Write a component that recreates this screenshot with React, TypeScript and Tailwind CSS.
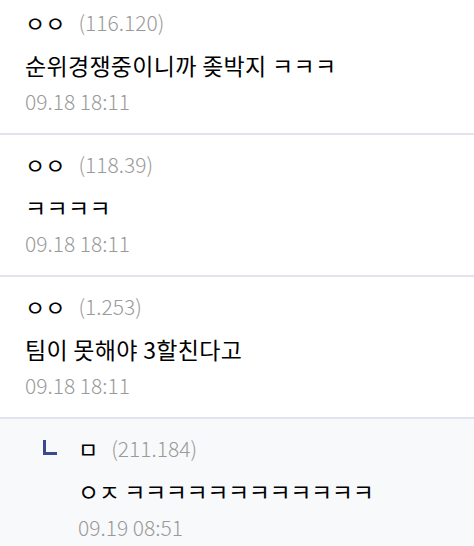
const font = "font-['Noto_Sans_CJK_KR','Noto_Sans',sans-serif]";

type Comment = {
  name: string;
  ip: string;
  text: string;
  date: string;
  reply?: boolean;
};

const comments: Comment[] = [
  { name: "ㅇㅇ", ip: "(116.120)", text: "순위경쟁중이니까 좆박지 ㅋㅋㅋ", date: "09.18 18:11" },
  { name: "ㅇㅇ", ip: "(118.39)", text: "ㅋㅋㅋㅋ", date: "09.18 18:11" },
  { name: "ㅇㅇ", ip: "(1.253)", text: "팀이 못해야 3할친다고", date: "09.18 18:11" },
  { name: "ㅁ", ip: "(211.184)", text: "ㅇㅈ ㅋㅋㅋㅋㅋㅋㅋㅋㅋㅋㅋㅋ", date: "09.19 08:51", reply: true },
];

function CommentItem({ c }: { c: Comment }) {
  return (
    <li
      className={`flex border-b-2 border-[#e3e2ee] pt-[14px] pb-[17px] ${c.reply ? "bg-[#f8f9fb] pl-[43px]" : "bg-white pl-[25px]"}`}
    >
      {c.reply && (
        <svg width="14" height="15" viewBox="0 0 14 15" className="mt-[7px] mr-[21px] shrink-0">
          <path d="M1.5 0 V13.5 H14" fill="none" stroke="#3b4a8e" strokeWidth="3" />
        </svg>
      )}
      <div className="flex flex-col">
        <div className="flex h-[30px] items-center gap-[13px] leading-[30px]">
          <span className="text-[22px] text-black">{c.name}</span>
          <span className="text-[21px] font-light text-[#9a9a9a]">{c.ip}</span>
        </div>
        <p
          className={`mt-[13px] h-[30px] text-[23px] leading-[30px] text-black ${c.reply ? "tracking-[-0.4px]" : "tracking-[0.3px]"}`}
        >
          {c.text}
        </p>
        <p className="mt-[6px] h-[30px] text-[21px] font-light leading-[30px] text-[#9a9a9a]">{c.date}</p>
      </div>
    </li>
  );
}

export default function App() {
  return (
    <div className={`h-[546px] w-[474px] overflow-hidden bg-[#f8f9fb] ${font}`}>
      <ul className="-mt-[7px] flex flex-col">
        {comments.map((c, i) => (
          <CommentItem key={i} c={c} />
        ))}
      </ul>
    </div>
  );
}
